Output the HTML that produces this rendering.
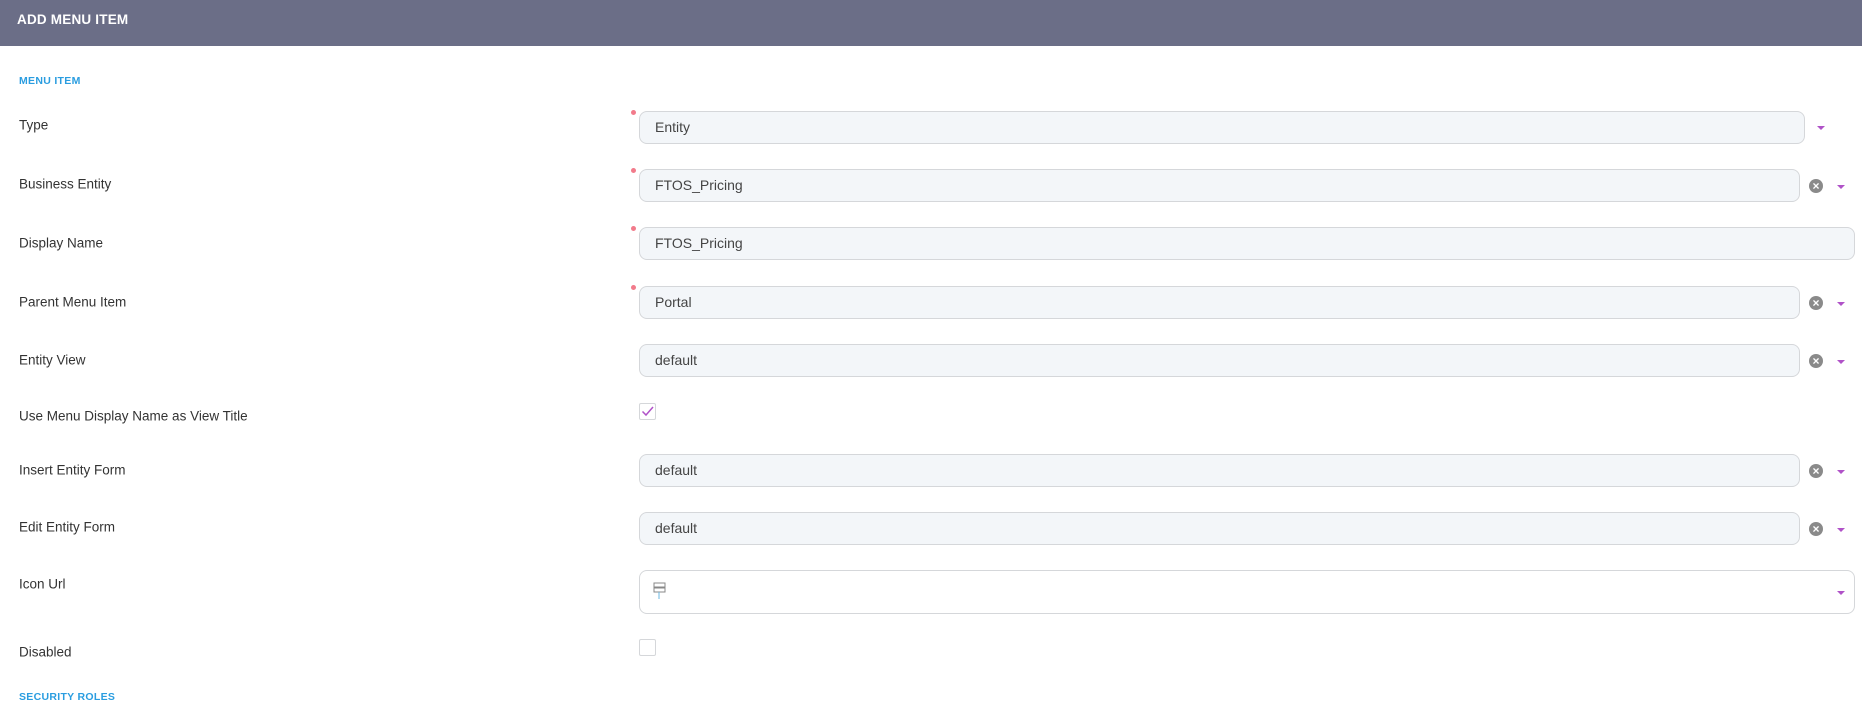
<!DOCTYPE html>
<html><head><style>
body{margin:0;width:1862px;height:705px;background:#fff;font-family:"Liberation Sans",sans-serif;overflow:hidden;position:relative}
.hdr{position:absolute;left:0;top:0;width:1862px;height:46px;background:#6b6e87;color:#fff;font-weight:bold;font-size:13.5px;line-height:40px;padding-left:17px;box-sizing:border-box;letter-spacing:.2px}
.sec{position:absolute;left:19px;color:#2a9de0;font-weight:bold;font-size:10.5px;letter-spacing:.3px}
.lbl{position:absolute;left:19px;color:#333;font-size:13.5px;transform:translateY(-50%)}
.in{position:absolute;left:639px;height:33px;box-sizing:border-box;border:1px solid #d5d7da;border-radius:8px;background:#f3f6f9;color:#444;font-size:14px;line-height:31px;padding-left:15px}
.dot{position:absolute;left:631px;width:5px;height:5px;border-radius:50%;background:#f27b8b}
.car{position:absolute;width:0;height:0;border-left:4px solid transparent;border-right:4px solid transparent;border-top:4px solid #b052c8}
.clr{position:absolute;width:14px;height:14px;border-radius:50%;background:#8a8a8a;color:#fff;font-size:12px;line-height:14px;text-align:center;font-weight:bold}
.cb{position:absolute;left:639px;width:17px;height:17px;box-sizing:border-box;border:1px solid #d5d7da;border-radius:2px;background:#fff}
</style></head><body>
<div class="hdr">ADD MENU ITEM</div>
<div class="sec" style="top:75px">MENU ITEM</div>

<div class="lbl" style="top:125px">Type</div>
<div class="dot" style="top:110px"></div>
<div class="in" style="top:111px;width:1166px">Entity</div>
<div class="car" style="left:1817px;top:126px"></div>

<div class="lbl" style="top:184px">Business Entity</div>
<div class="dot" style="top:168px"></div>
<div class="in" style="top:169px;width:1161px">FTOS_Pricing</div>
<div class="clr" style="left:1809px;top:179px">×</div>
<div class="car" style="left:1837px;top:185px"></div>

<div class="lbl" style="top:243px">Display Name</div>
<div class="dot" style="top:226px"></div>
<div class="in" style="top:227px;width:1216px">FTOS_Pricing</div>

<div class="lbl" style="top:302px">Parent Menu Item</div>
<div class="dot" style="top:285px"></div>
<div class="in" style="top:286px;width:1161px">Portal</div>
<div class="clr" style="left:1809px;top:296px">×</div>
<div class="car" style="left:1837px;top:302px"></div>

<div class="lbl" style="top:360px">Entity View</div>
<div class="in" style="top:344px;width:1161px">default</div>
<div class="clr" style="left:1809px;top:354px">×</div>
<div class="car" style="left:1837px;top:360px"></div>

<div class="lbl" style="top:416px">Use Menu Display Name as View Title</div>
<div class="cb" style="top:403px"><svg width="15" height="15" viewBox="0 0 15 15" style="position:absolute;left:0;top:0"><path d="M2.5 7.5 L6 11 L13 3" fill="none" stroke="#b052c8" stroke-width="1.5"/></svg></div>

<div class="lbl" style="top:470px">Insert Entity Form</div>
<div class="in" style="top:454px;width:1161px">default</div>
<div class="clr" style="left:1809px;top:464px">×</div>
<div class="car" style="left:1837px;top:470px"></div>

<div class="lbl" style="top:527px">Edit Entity Form</div>
<div class="in" style="top:512px;width:1161px">default</div>
<div class="clr" style="left:1809px;top:522px">×</div>
<div class="car" style="left:1837px;top:528px"></div>

<div class="lbl" style="top:584px">Icon Url</div>
<div class="in" style="top:570px;height:44px;width:1216px;background:#fff"><svg width="16" height="20" viewBox="0 0 16 20" style="position:absolute;left:12px;top:10px"><rect x="2" y="2" width="11" height="4" fill="none" stroke="#888" stroke-width="1"/><rect x="2" y="7" width="11" height="4" fill="none" stroke="#888" stroke-width="1"/><line x1="7" y1="11" x2="7" y2="18" stroke="#6ab7e0" stroke-width="1"/></svg></div>
<div class="car" style="left:1837px;top:591px"></div>

<div class="lbl" style="top:652px">Disabled</div>
<div class="cb" style="top:639px"></div>

<div class="sec" style="top:691px">SECURITY ROLES</div>
</body></html>
